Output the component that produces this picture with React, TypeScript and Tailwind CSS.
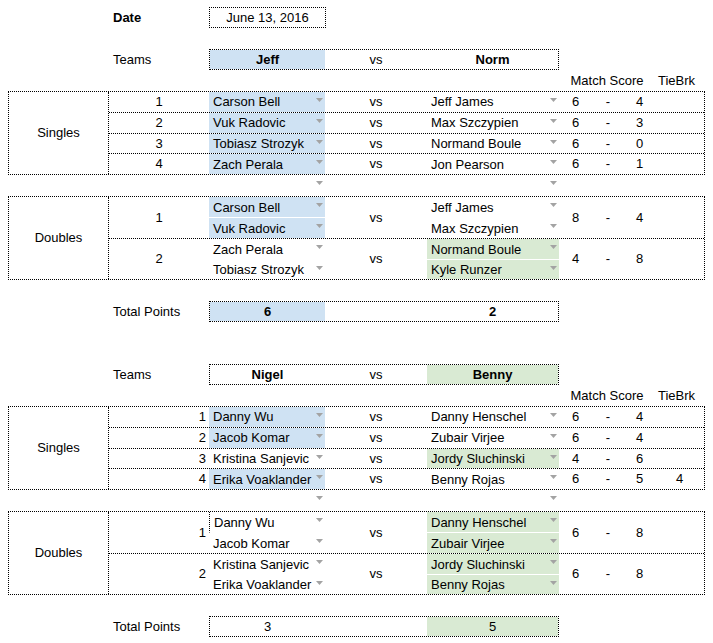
import React from 'react';
import clsx from 'clsx';

const BLUE = 'bg-[#cfe2f3]';
const GREEN = 'bg-[#d9ead3]';

// small grey dropdown caret like the sheet's data validation chip
const Caret = () => (
  <svg width="7" height="4" viewBox="0 0 7 4" className="mt-[6px] mr-[2px] shrink-0 self-start">
    <path d="M0 0h7L3.5 4z" fill="#a3a3a3" />
  </svg>
);

type NameProps = { name?: string; fill?: string; className?: string };

const NameCell = ({ name, fill, className }: NameProps) => (
  <div className={clsx('flex items-center justify-between', fill, className)}>
    <span className="pl-[4px] whitespace-nowrap leading-none">{name}</span>
    <Caret />
  </div>
);

type Singles = {
  num: number;
  left: string;
  leftFill?: string;
  right: string;
  rightFill?: string;
  a: number;
  b: number;
  tb?: number;
};

type Doubles = {
  num: number;
  left: [string, string];
  leftFill?: string;
  right: [string, string];
  rightFill?: string;
  a: number;
  b: number;
  leftEdge?: boolean;
};

const Scores = ({ a, b, tb }: { a: number; b: number; tb?: number }) => (
  <>
    <div className="w-[33px] flex items-center justify-center">{a}</div>
    <div className="w-[32px] flex items-center justify-center">-</div>
    <div className="w-[31px] flex items-center justify-center">{b}</div>
    <div className="flex-1 flex items-center justify-center">{tb ?? ''}</div>
  </>
);

const SinglesRow = ({ row, last, alignRight }: { row: Singles; last: boolean; alignRight: boolean }) => (
  <div className={clsx('flex', last ? 'flex-1' : 'h-[21px] border-b border-dotted border-black')}>
    <div className={clsx('w-[100px] flex items-center', alignRight ? 'justify-end pr-[3px]' : 'justify-center')}>
      {row.num}
    </div>
    <NameCell name={row.left} fill={row.leftFill} className="w-[116px]" />
    <div className="w-[102px] flex items-center justify-center">vs</div>
    <NameCell name={row.right} fill={row.rightFill} className="w-[132px]" />
    <Scores a={row.a} b={row.b} tb={row.tb} />
  </div>
);

const DoublesGroup = ({ row, last, alignRight }: { row: Doubles; last: boolean; alignRight: boolean }) => (
  <div className={clsx('flex', last ? 'flex-1' : 'h-[42px] border-b border-dotted border-black')}>
    <div className={clsx('w-[100px] flex items-center', alignRight ? 'justify-end pr-[3px]' : 'justify-center')}>
      {row.num}
    </div>
    <div className="w-[116px] flex flex-col">
      <NameCell
        name={row.left[0]}
        fill={row.leftFill}
        className={clsx(
          'h-[21px] border-b border-white',
          row.leftEdge && 'border-l border-dotted border-l-black'
        )}
      />
      <NameCell name={row.left[1]} fill={row.leftFill} className="flex-1" />
    </div>
    <div className="w-[102px] flex items-center justify-center">vs</div>
    <div className="w-[132px] flex flex-col">
      <NameCell name={row.right[0]} fill={row.rightFill} className="h-[21px] border-b border-white" />
      <NameCell name={row.right[1]} fill={row.rightFill} className="flex-1" />
    </div>
    <Scores a={row.a} b={row.b} />
  </div>
);

const Block = ({ label, children }: { label: string; children: React.ReactNode }) => (
  <div className="ml-[8px] w-[697px] h-[84px] flex border border-dotted border-black">
    <div className="w-[100px] flex items-center justify-center border-r border-dotted border-black">{label}</div>
    <div className="flex-1 flex flex-col">{children}</div>
  </div>
);

const Plain = ({ children, className }: { children?: React.ReactNode; className?: string }) => (
  <div className={clsx('flex h-[21px]', className)}>{children}</div>
);

const CaretRow = () => (
  <Plain>
    <div className="w-[209px]" />
    <NameCell className="w-[116px]" />
    <div className="w-[102px]" />
    <NameCell className="w-[132px]" />
  </Plain>
);

const TeamBox = ({
  left,
  right,
  leftFill,
  rightFill,
  bold,
}: {
  left: string | number;
  right: string | number;
  leftFill?: string;
  rightFill?: string;
  bold: boolean;
}) => (
  <div className="w-[350px] h-[21px] flex border border-dotted border-black">
    <div className={clsx('w-[115px] flex items-center justify-center', leftFill, bold && 'font-bold')}>{left}</div>
    <div className="w-[102px] flex items-center justify-center">vs</div>
    <div className={clsx('flex-1 flex items-center justify-center', rightFill, bold && 'font-bold')}>{right}</div>
  </div>
);

const TotalBox = ({
  left,
  right,
  leftFill,
  rightFill,
  bold,
}: {
  left: number;
  right: number;
  leftFill?: string;
  rightFill?: string;
  bold: boolean;
}) => (
  <div className="w-[350px] h-[21px] flex border border-dotted border-black">
    <div className={clsx('w-[115px] flex items-center justify-center', leftFill, bold && 'font-bold')}>{left}</div>
    <div className="w-[102px]" />
    <div className={clsx('flex-1 flex items-center justify-center', rightFill, bold && 'font-bold')}>{right}</div>
  </div>
);

const HeaderRow = () => (
  <Plain>
    <div className="w-[559px]" />
    <div className="w-[96px] flex items-center justify-center whitespace-nowrap">Match Score</div>
    <div className="w-[49px] flex items-center pl-[3px]">TieBrk</div>
  </Plain>
);

const Label = ({ children, bold }: { children: React.ReactNode; bold?: boolean }) => (
  <>
    <div className="w-[109px]" />
    <div className={clsx('w-[100px] flex items-center pl-[4px] whitespace-nowrap', bold && 'font-bold')}>{children}</div>
  </>
);

const matchOne = {
  singles: [
    { num: 1, left: 'Carson Bell', leftFill: BLUE, right: 'Jeff James', a: 6, b: 4 },
    { num: 2, left: 'Vuk Radovic', leftFill: BLUE, right: 'Max Szczypien', a: 6, b: 3 },
    { num: 3, left: 'Tobiasz Strozyk', leftFill: BLUE, right: 'Normand Boule', a: 6, b: 0 },
    { num: 4, left: 'Zach Perala', leftFill: BLUE, right: 'Jon Pearson', a: 6, b: 1 },
  ] as Singles[],
  doubles: [
    { num: 1, left: ['Carson Bell', 'Vuk Radovic'], leftFill: BLUE, right: ['Jeff James', 'Max Szczypien'], a: 8, b: 4 },
    { num: 2, left: ['Zach Perala', 'Tobiasz Strozyk'], right: ['Normand Boule', 'Kyle Runzer'], rightFill: GREEN, a: 4, b: 8 },
  ] as Doubles[],
};

const matchTwo = {
  singles: [
    { num: 1, left: 'Danny Wu', leftFill: BLUE, right: 'Danny Henschel', a: 6, b: 4 },
    { num: 2, left: 'Jacob Komar', leftFill: BLUE, right: 'Zubair Virjee', a: 6, b: 4 },
    { num: 3, left: 'Kristina Sanjevic', right: 'Jordy Sluchinski', rightFill: GREEN, a: 4, b: 6 },
    { num: 4, left: 'Erika Voaklander', leftFill: BLUE, right: 'Benny Rojas', a: 6, b: 5, tb: 4 },
  ] as Singles[],
  doubles: [
    { num: 1, left: ['Danny Wu', 'Jacob Komar'], right: ['Danny Henschel', 'Zubair Virjee'], rightFill: GREEN, a: 6, b: 8, leftEdge: true },
    { num: 2, left: ['Kristina Sanjevic', 'Erika Voaklander'], right: ['Jordy Sluchinski', 'Benny Rojas'], rightFill: GREEN, a: 6, b: 8 },
  ] as Doubles[],
};

export default function App() {
  return (
    <div className="w-[713px] min-h-[643px] bg-white text-black text-[13px] font-['Liberation_Sans',Arial,sans-serif] pt-[7px] flex flex-col">
      {/* Date */}
      <Plain>
        <Label bold>Date</Label>
        <div className="w-[117px] h-[21px] flex items-center justify-center border border-dotted border-black">
          June 13, 2016
        </div>
      </Plain>
      <Plain />

      {/* Jeff vs Norm */}
      <Plain>
        <Label>Teams</Label>
        <TeamBox left="Jeff" right="Norm" leftFill={BLUE} bold />
      </Plain>
      <HeaderRow />
      <Block label="Singles">
        {matchOne.singles.map((r, i) => (
          <SinglesRow key={r.num} row={r} last={i === 3} alignRight={false} />
        ))}
      </Block>
      <CaretRow />
      <Block label="Doubles">
        {matchOne.doubles.map((r, i) => (
          <DoublesGroup key={r.num} row={r} last={i === 1} alignRight={false} />
        ))}
      </Block>
      <Plain />
      <Plain>
        <Label>Total Points</Label>
        <TotalBox left={6} right={2} leftFill={BLUE} bold />
      </Plain>
      <Plain />
      <Plain />

      {/* Nigel vs Benny */}
      <Plain>
        <Label>Teams</Label>
        <TeamBox left="Nigel" right="Benny" rightFill={GREEN} bold />
      </Plain>
      <HeaderRow />
      <Block label="Singles">
        {matchTwo.singles.map((r, i) => (
          <SinglesRow key={r.num} row={r} last={i === 3} alignRight />
        ))}
      </Block>
      <CaretRow />
      <Block label="Doubles">
        {matchTwo.doubles.map((r, i) => (
          <DoublesGroup key={r.num} row={r} last={i === 1} alignRight />
        ))}
      </Block>
      <Plain />
      <Plain>
        <Label>Total Points</Label>
        <TotalBox left={3} right={5} rightFill={GREEN} bold={false} />
      </Plain>
    </div>
  );
}
